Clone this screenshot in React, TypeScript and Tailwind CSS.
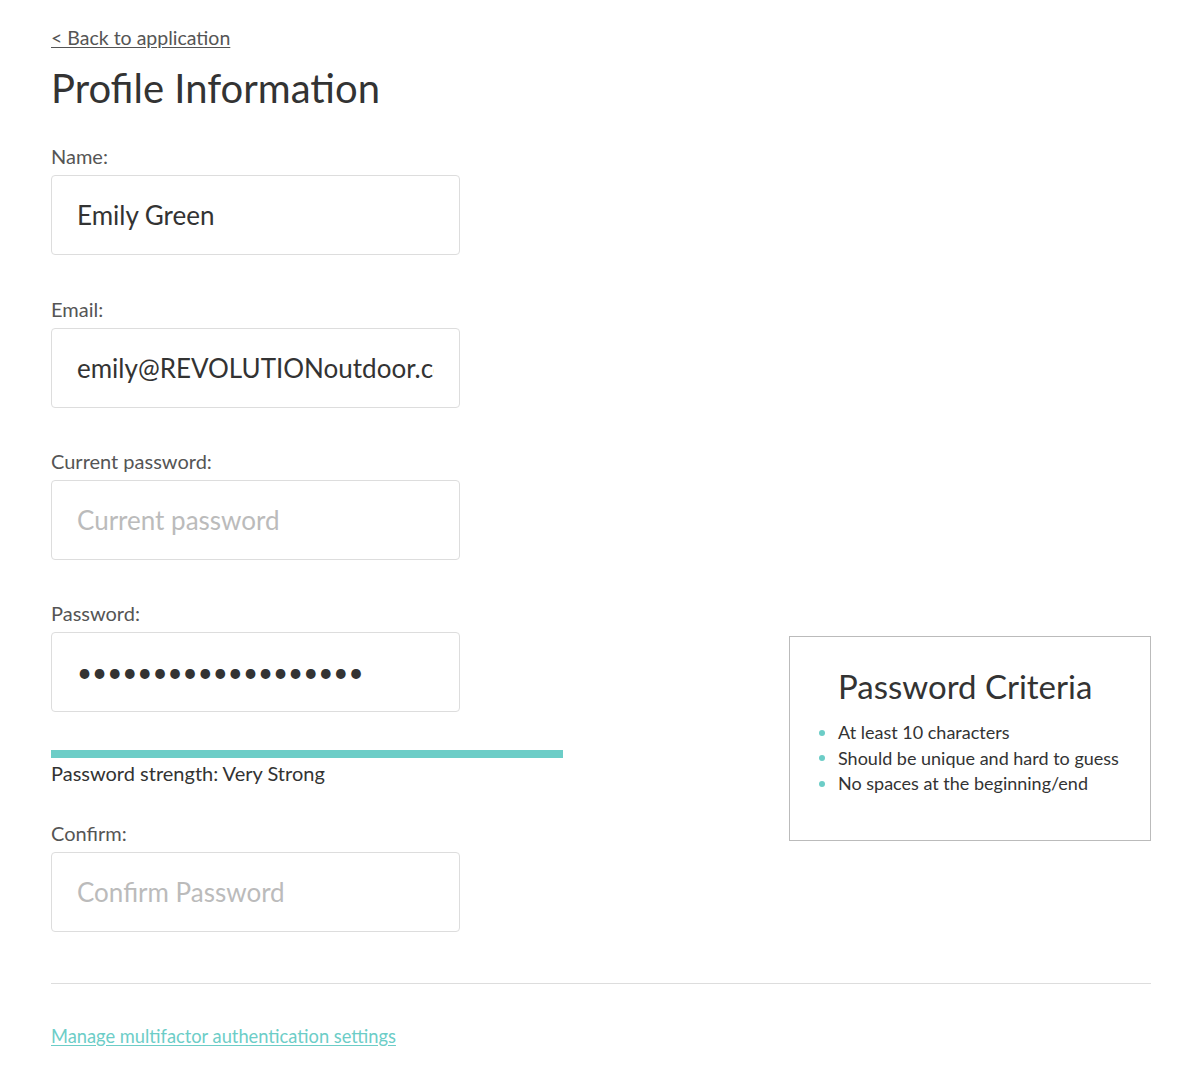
import React from "react";

const font = { fontFamily: "Lato, 'Open Sans', sans-serif" };

function Field({
  label,
  value,
  placeholder,
  type = "text",
  className = "",
}: {
  label: string;
  value?: string;
  placeholder?: string;
  type?: string;
  className?: string;
}) {
  return (
    <div className={className}>
      <label className="block text-[20px] leading-[24px] text-[#555]">{label}</label>
      <input
        type={type}
        defaultValue={value}
        placeholder={placeholder}
        className="mt-[7px] block h-[80px] w-[409px] rounded-[4px] border border-[#ddd] bg-white px-[25px] text-[26px] text-[#333] outline-none placeholder:text-[#bbb]"
        style={font}
      />
    </div>
  );
}

export default function App() {
  return (
    <div className="min-h-screen bg-white text-[#333]" style={font}>
      <div className="mx-[51px] w-[1100px] pt-[26px]">
        <a href="#" className="text-[19.5px] leading-[24px] text-[#555] underline underline-offset-2">
          &lt; Back to application
        </a>
        <h1 className="mt-[13px] text-[40px] leading-[48px] text-[#333]">Profile Information</h1>

        <div className="flex justify-between">
          <div className="w-[512px]">
            <Field label="Name:" value="Emily Green" className="mt-[32px]" />
            <Field label="Email:" value="emily@REVOLUTIONoutdoor.com" className="mt-[42px]" />
            <Field label="Current password:" placeholder="Current password" type="password" className="mt-[41px]" />
            <Field label="Password:" value="abcdefghijklmnopqrs" type="password" className="mt-[41px]" />

            <div className="mt-[38px] h-[8px] w-[512px] bg-[#6ccdc7]" />
            <div className="text-[20px] leading-[30px] text-[#333]">Password strength: Very Strong</div>

            <Field label="Confirm:" placeholder="Confirm Password" type="password" className="mt-[33px]" />
          </div>

          <div className="mt-[524px] h-[205px] w-[362px] self-start border border-[#bbb] pl-[48px] pt-[28px]">
            <h2 className="text-[33px] leading-[42px] text-[#333]">Password Criteria</h2>
            <ul className="mt-[13px] text-[18px] leading-[25.5px] text-[#333]">
              {["At least 10 characters", "Should be unique and hard to guess", "No spaces at the beginning/end"].map((t) => (
                <li key={t} className="flex items-center">
                  <span className="-ml-[19px] mr-[13px] h-[6px] w-[6px] shrink-0 rounded-full bg-[#6ccdc7]" />
                  {t}
                </li>
              ))}
            </ul>
          </div>
        </div>

        <hr className="mt-[51px] border-t border-[#ddd]" />

        <a href="#" className="mt-[40px] inline-block text-[18.3px] leading-[24px] text-[#6ccdc7] underline underline-offset-2">
          Manage multifactor authentication settings
        </a>
      </div>
    </div>
  );
}
